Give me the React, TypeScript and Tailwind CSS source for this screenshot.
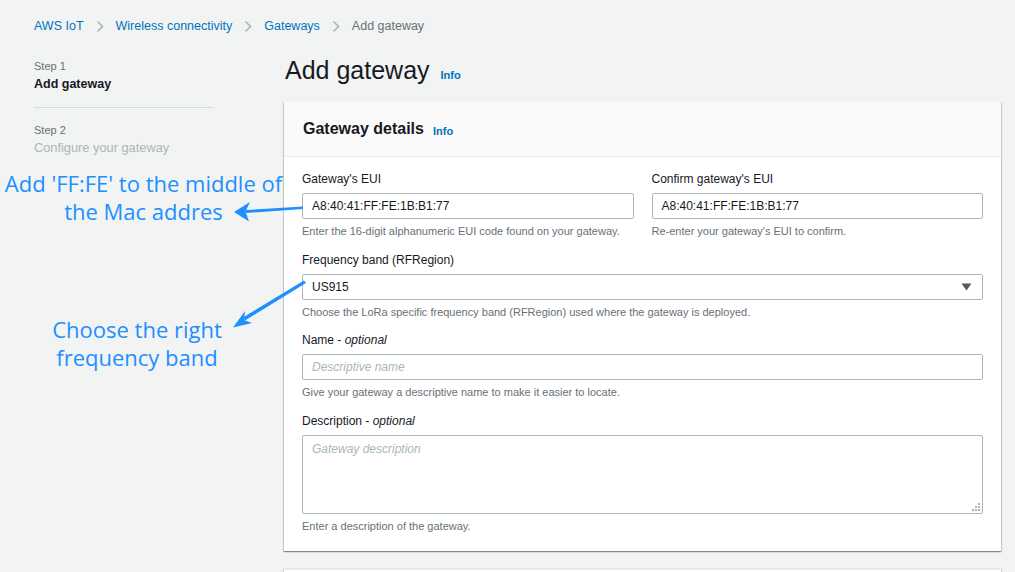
import React from 'react';

const font = { fontFamily: '"Liberation Sans", Arial, sans-serif' };

function Chevron() {
    return (
        <svg width="8" height="13" viewBox="0 0 8 13" className="mx-[12px]">
            <path d="M1.5 1.5 L6.5 6.5 L1.5 11.5" fill="none" stroke="#aab7b8" strokeWidth="1.6" />
        </svg>
    );
}

function Info() {
    return <span className="text-[11px] font-bold text-[#0073bb]">Info</span>;
}

function Label({ children }: { children: React.ReactNode }) {
    return <div className="mb-[5px] text-[12px] leading-[18px] text-[#16191f]">{children}</div>;
}

function Hint({ children }: { children: React.ReactNode }) {
    return <div className="mt-[4px] text-[11px] leading-[16px] text-[#687078]">{children}</div>;
}

const inputCls =
    'flex h-[26px] w-full items-center rounded-[2px] border border-[#aab7b8] bg-white px-[9px] text-[12px] text-[#16191f]';

export default function App() {
    return (
        <div style={font} className="relative h-[572px] w-[1015px] overflow-hidden bg-[#f2f3f3]">
            {/* breadcrumb */}
            <div className="mt-[17px] flex h-[18px] items-center pl-[34px] text-[12.5px]">
                <span className="text-[#0073bb]">AWS IoT</span>
                <Chevron />
                <span className="text-[#0073bb]">Wireless connectivity</span>
                <Chevron />
                <span className="text-[#0073bb]">Gateways</span>
                <Chevron />
                <span className="text-[#687078]">Add gateway</span>
            </div>

            <div className="mt-[15px] flex items-start pl-[34px]">
                {/* steps */}
                <nav className="mt-[7px] w-[179px]">
                    <div className="text-[11px] leading-[18px] text-[#687078]">Step 1</div>
                    <div className="text-[12.5px] font-bold leading-[18px] text-[#16191f]">Add gateway</div>
                    <div className="mt-[14px] h-px bg-[#d5dbdb]" />
                    <div className="mt-[13px] text-[11px] leading-[18px] text-[#687078]">Step 2</div>
                    <div className="text-[12.8px] leading-[18px] text-[#aab7b8]">Configure your gateway</div>
                </nav>

                {/* main */}
                <main className="ml-[71px] w-[717px]">
                    <div className="flex h-[40px] items-center gap-[11px]">
                        <h1 className="pl-px text-[25px] leading-[40px] text-[#16191f]">Add gateway</h1>
                        <span className="mt-[7px]"><Info /></span>
                    </div>

                    <section className="mt-[12px] bg-white shadow-[0_1px_1px_0_rgba(0,28,36,0.3),1px_1px_1px_0_rgba(0,28,36,0.15),-1px_1px_1px_0_rgba(0,28,36,0.15)]">
                        <header className="flex h-[55px] items-center gap-[9px] border-b border-[#eaeded] bg-[#fafafa] px-[19px]">
                            <h2 className="text-[16px] font-bold text-[#16191f]">Gateway details</h2>
                            <span className="mt-[2px]"><Info /></span>
                        </header>

                        <div className="px-[18px] pb-[17px] pt-[13px]">
                            <div className="grid grid-cols-2 gap-[18px]">
                                <div>
                                    <Label>Gateway's EUI</Label>
                                    <div className={inputCls}>A8:40:41:FF:FE:1B:B1:77</div>
                                    <Hint>Enter the 16-digit alphanumeric EUI code found on your gateway.</Hint>
                                </div>
                                <div>
                                    <Label>Confirm gateway's EUI</Label>
                                    <div className={inputCls}>A8:40:41:FF:FE:1B:B1:77</div>
                                    <Hint>Re-enter your gateway's EUI to confirm.</Hint>
                                </div>
                            </div>

                            <div className="mt-[12px]">
                                <Label>Frequency band (RFRegion)</Label>
                                <div className={inputCls + ' justify-between'}>
                                    <span>US915</span>
                                    <svg width="11" height="8" viewBox="0 0 11 8" className="mr-[1px]">
                                        <path d="M0.5 0.5 H10.5 L5.5 7.5 Z" fill="#545b64" />
                                    </svg>
                                </div>
                                <Hint>Choose the LoRa specific frequency band (RFRegion) used where the gateway is deployed.</Hint>
                            </div>

                            <div className="mt-[11px]">
                                <Label>
                                    Name - <i>optional</i>
                                </Label>
                                <div className={inputCls + ' mt-[1px] italic text-[#aab7b8]'}>Descriptive name</div>
                                <Hint>Give your gateway a descriptive name to make it easier to locate.</Hint>
                            </div>

                            <div className="mt-[12px]">
                                <Label>
                                    Description - <i>optional</i>
                                </Label>
                                <div className="relative h-[79px] w-full rounded-[2px] border border-[#aab7b8] bg-white px-[9px] pt-[5px] text-[12px] italic leading-[16px] text-[#aab7b8]">
                                    Gateway description
                                    <svg width="8" height="8" viewBox="0 0 8 8" className="absolute bottom-[2px] right-[2px]">
                                        <rect x="6" y="0" width="2" height="2" fill="#aab7b8" />
                                        <rect x="3" y="3" width="2" height="2" fill="#aab7b8" />
                                        <rect x="6" y="3" width="2" height="2" fill="#aab7b8" />
                                        <rect x="0" y="6" width="2" height="2" fill="#aab7b8" />
                                        <rect x="3" y="6" width="2" height="2" fill="#aab7b8" />
                                        <rect x="6" y="6" width="2" height="2" fill="#aab7b8" />
                                    </svg>
                                </div>
                                <Hint>Enter a description of the gateway.</Hint>
                            </div>
                        </div>
                    </section>

                    <section className="mt-[18px] h-[60px] border-t border-[#eaeded] bg-white shadow-[1px_0_1px_0_rgba(0,28,36,0.15),-1px_0_1px_0_rgba(0,28,36,0.15)]" />
                </main>
            </div>

            {/* annotations */}
            <div
                className="absolute left-0 top-[169px] w-[287px] text-center text-[22px] leading-[28px] text-[#1e8fff]"
                style={{ fontFamily: '"Open Sans", "Noto Sans", sans-serif' }}
            >
                Add 'FF:FE' to the middle of
                <br />
                the Mac addres
            </div>
            <div
                className="absolute left-0 top-[315px] w-[274px] text-center text-[22px] leading-[28px] text-[#1e8fff]"
                style={{ fontFamily: '"Open Sans", "Noto Sans", sans-serif' }}
            >
                Choose the right
                <br />
                frequency band
            </div>
            <svg className="pointer-events-none absolute left-0 top-0" width="1015" height="572">
                <path d="M303 206.5 L303 209 L246 213 L246 210 Z" fill="#1e8fff" />
                <path d="M234 212 L250 202 L245.5 211.5 L249 221.5 Z" fill="#1e8fff" />
                <path d="M304 280.5 L306 283 L245 320.5 L243 317.5 Z" fill="#1e8fff" />
                <path d="M233 327.5 L245 311 L244 320 L252 323 Z" fill="#1e8fff" />
            </svg>
        </div>
    );
}
